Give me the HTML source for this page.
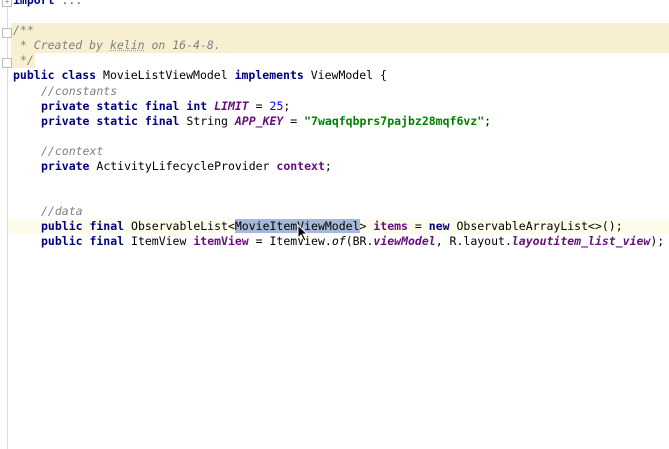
<!DOCTYPE html>
<html><head><style>
body{margin:0;width:669px;height:449px;background:#fff;overflow:hidden;position:relative;font-family:"DejaVu Sans Mono","Liberation Mono",monospace;font-size:11.5px;color:#000}
.l{position:absolute;left:13px;white-space:pre;line-height:15px;height:15px}
.k{color:#000080;font-weight:bold}
.c{color:#808080;font-style:italic}
.f{color:#660e7a;font-weight:bold}
.s{color:#660e7a;font-weight:bold;font-style:italic}
.i{font-style:italic}
.fi{color:#660e7a;font-style:italic}
.n{color:#0000ff}
.str{color:#008000;font-weight:bold}
.gut{position:absolute;left:7px;top:0;width:1px;height:449px;background:#ddd}
</style></head><body>
<div style="position:absolute;left:11px;top:23px;width:658px;height:30px;background:#f7efcf"></div>
<div style="position:absolute;left:11px;top:53px;width:24px;height:15px;background:#f7efcf"></div>
<div style="position:absolute;left:8px;top:219px;width:661px;height:15px;background:#fdfbea"></div>
<div class="gut"></div>
<div style="position:absolute;left:2px;top:-3px;width:8px;height:8px;border:1px solid #bbb;background:#fff;font-size:8px;line-height:8px;text-align:center;color:#888">+</div>
<div style="position:absolute;left:2px;top:28px;width:8px;height:8px;border:1px solid #bbb;background:#fff"></div>
<div style="position:absolute;left:2px;top:58px;width:8px;height:8px;border:1px solid #bbb;background:#fff"></div>
<div class="l" style="top:-7px"><span class="k">import</span> <span style="color:#555">...</span></div>
<div class="l c" style="top:23px">/**</div>
<div class="l c" style="top:38px"> * Created by <span style="text-decoration:underline dotted #9a9">kelin</span> on 16-4-8.</div>
<div class="l c" style="top:53px"> */</div>
<div class="l" style="top:68px"><span class="k">public class</span> MovieListViewModel <span class="k">implements</span> ViewModel {</div>
<div class="l c" style="top:84px;left:41px">//constants</div>
<div class="l" style="top:99px;left:41px"><span class="k">private static final int</span> <span class="s">LIMIT</span> = <span class="n">25</span>;</div>
<div class="l" style="top:114px;left:41px"><span class="k">private static final</span> String <span class="s">APP_KEY</span> = <span class="str">"7waqfqbprs7pajbz28mqf6vz"</span>;</div>
<div class="l c" style="top:144px;left:41px">//context</div>
<div class="l" style="top:159px;left:41px"><span class="k">private</span> ActivityLifecycleProvider <span class="f">context</span>;</div>
<div class="l c" style="top:204px;left:41px">//data</div>
<div class="l" style="top:219px;left:41px"><span class="k">public final</span> ObservableList&lt;<span style="background:#a6b8d8">MovieItemViewModel</span>&gt; <span class="f">items</span> = <span class="k">new</span> ObservableArrayList&lt;&gt;();</div>
<div class="l" style="top:234px;left:41px"><span class="k">public final</span> ItemView <span class="f">itemView</span> = ItemView.<span class="i">of</span>(BR.<span class="s">viewModel</span>, R.layout.<span class="s">layoutitem_list_view</span>);</div>
<svg style="position:absolute;left:297px;top:224px" width="12" height="18" viewBox="0 0 12 18"><path d="M1 1 L1 14 L4 11 L7 17 L9 16 L6 10 L10 10 Z" fill="#000" stroke="#fff" stroke-width="1"/></svg>
</body></html>
